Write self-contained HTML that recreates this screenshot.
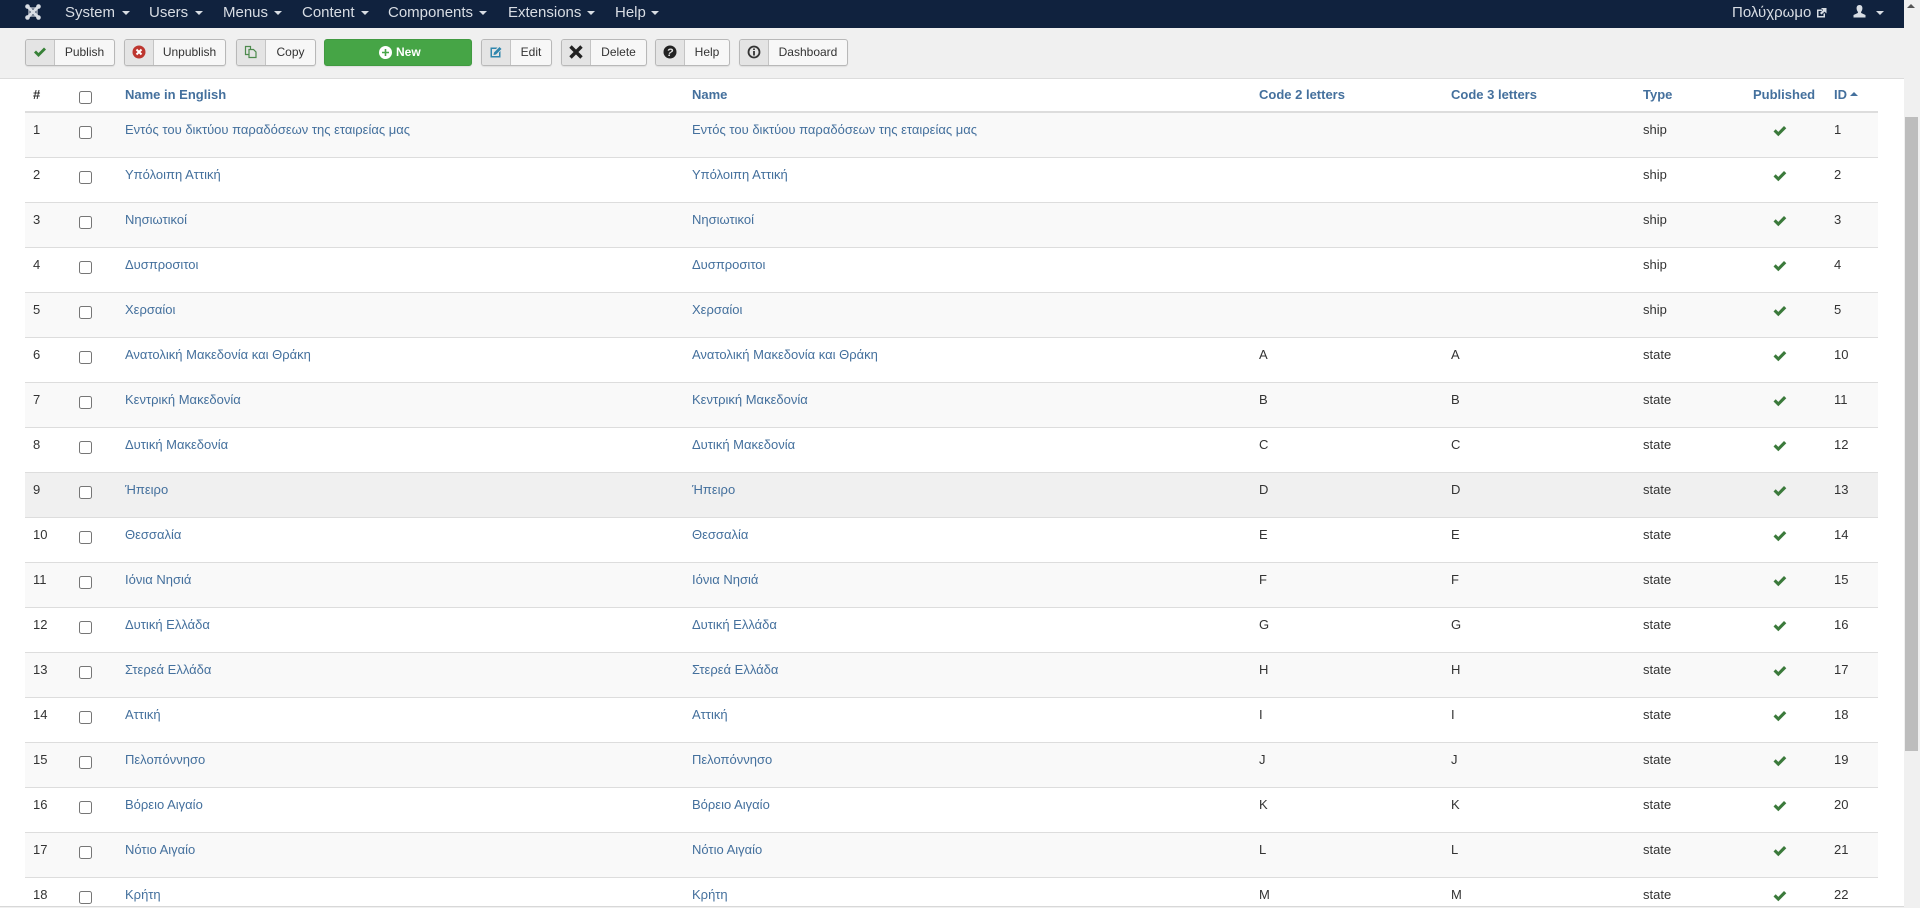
<!DOCTYPE html>
<html lang="en"><head><meta charset="utf-8"><title>Joomla Admin</title>
<style>
*{box-sizing:border-box}
html,body{margin:0;padding:0;width:1920px;height:908px;overflow:hidden;background:#f0f0f0;font-family:"Liberation Sans",Arial,sans-serif;font-size:13px;color:#333}
.nav{position:absolute;left:0;top:0;width:1904px;height:28px;background:#10223e}
.nav span.m{position:absolute;top:3px;font-size:15px;line-height:20px;color:#d8dde4;white-space:nowrap}
.c{position:absolute;width:0;height:0;border-left:4px solid transparent;border-right:4px solid transparent;border-top:4px solid #d8dde4;top:11px}
.bar{position:absolute;left:0;top:28px;width:1904px;height:51px;background:#f0f0f0;border-bottom:1px solid #dcdcdc}
.btn{position:absolute;top:39px;height:27px;border:1px solid #b8b8b8;border-radius:3px;background:#f7f7f7;font-size:12px;line-height:25px;color:#333;text-align:center;white-space:nowrap;box-shadow:0 1px 1px rgba(0,0,0,.08)}
.btn i{position:absolute;left:0;top:0;bottom:0;width:29px;background:#e4e4e4;border-right:1px solid #c4c4c4;border-radius:2px 0 0 2px}
.btn i svg{position:absolute;left:7px;top:5px}
.btn b{font-weight:normal;position:absolute;left:29px;right:0;top:0;text-align:center}
.new{background:#46a546;border-color:#419a41;color:#fff;font-weight:bold}
.main{position:absolute;left:0;top:79px;width:1904px;height:828px;background:#fff;border-bottom:1px solid #d8d8d8;overflow:hidden}
table{position:absolute;left:25px;top:0;width:1853px;border-collapse:collapse;table-layout:fixed}
th,td{padding:0;vertical-align:top;text-align:left;font-size:13px;line-height:18px}
thead tr{height:33px}
th{padding-top:7px;color:#44709d;font-weight:bold;border-bottom:2px solid #ddd}
th:first-child{color:#333}
tbody tr{height:45px}
tbody td{padding-top:8px;border-bottom:1px solid #ddd}
tbody tr:nth-child(odd){background:#f9f9f9}
tbody tr.h{background:#f0f0f0}
td a{color:#44709d;text-decoration:none}
.n{padding-left:8px;position:relative}
.cb{display:block;position:absolute;left:54px;top:13px;width:13px;height:13px;border:1px solid #767676;border-radius:2.5px;background:#fff}
th .cb{top:12px}
.chk{display:block;margin-left:20px;margin-top:4px}
.sb{position:absolute;left:1904px;top:0;width:16px;height:908px;background:#f0f0f0}
.sb .t{position:absolute;left:1px;top:117px;width:13px;height:634px;background:#bdbdbd}
.sb .u{position:absolute;left:3px;top:4px;width:0;height:0;border-left:4px solid transparent;border-right:4px solid transparent;border-bottom:4px solid #555}
</style></head><body>
<svg width="0" height="0" style="position:absolute"><defs><symbol id="k" viewBox="0 0 14 12"><path d="M.5 6.5 2.7 4.3 5.3 6.9 11 1 13.3 3.3 5.3 11.3Z" fill="#3b7a3b"/></symbol></defs></svg>
<div class="nav">
<svg style="position:absolute;left:24px;top:3px" width="18" height="18" viewBox="0 0 18 18" fill="none" stroke="#d8dde4"><path d="M3.5 3.5 14.5 14.5M14.5 3.5 3.5 14.5" stroke-width="3"/><rect x="5" y="5" width="8" height="8" stroke-width="1.6" opacity=".7"/><g fill="#d8dde4" stroke="none"><circle cx="3.5" cy="3.5" r="2.3"/><circle cx="14.5" cy="3.5" r="2.3"/><circle cx="3.5" cy="14.5" r="2.3"/><circle cx="14.5" cy="14.5" r="2.3"/></g></svg>
<span class="m" style="left:65px">System</span><div class="c" style="left:122px"></div>
<span class="m" style="left:149px">Users</span><div class="c" style="left:195px"></div>
<span class="m" style="left:223px">Menus</span><div class="c" style="left:274px"></div>
<span class="m" style="left:302px">Content</span><div class="c" style="left:361px"></div>
<span class="m" style="left:388px">Components</span><div class="c" style="left:479px"></div>
<span class="m" style="left:508px">Extensions</span><div class="c" style="left:587px"></div>
<span class="m" style="left:615px">Help</span><div class="c" style="left:651px"></div>
<span class="m" style="left:1732px">Πολύχρωμο</span>
<svg style="position:absolute;left:1816px;top:7px" width="11" height="11" viewBox="0 0 11 11"><path d="M1 2.5H6V4H2.5V9H7.5V6.5H9V10.5H1Z M5 1H10.5V6.5L8.6 4.6 5.5 7.5 4 6 7 3Z" fill="#d8dde4"/></svg>
<svg style="position:absolute;left:1853px;top:5px" width="13" height="13" viewBox="0 0 13 13"><path d="M6.5 0C8.6 0 9.6 1.6 9.4 3.6 9.3 5 8.7 6.2 8 7L8.2 8 12.5 10V12.5H.5V10L4.8 8 5 7C4.3 6.2 3.7 5 3.6 3.6 3.4 1.6 4.4 0 6.5 0Z" fill="#d8dde4"/></svg>
<div class="c" style="left:1876px"></div>
</div>
<div class="bar"></div>
<div class="btn" style="left:25px;width:90px"><i><svg width="14" height="14" viewBox="0 0 14 14"><path d="M1 7.5 3 5.5 5.5 8 11 2.5 13 4.5 5.5 12Z" fill="#378137"/></svg></i><b>Publish</b></div>
<div class="btn" style="left:124px;width:102px"><i><svg width="14" height="14" viewBox="0 0 14 14"><circle cx="7" cy="7" r="6.5" fill="#bd362f"/><path d="M4.5 4.5 9.5 9.5M9.5 4.5 4.5 9.5" stroke="#fff" stroke-width="2"/></svg></i><b>Unpublish</b></div>
<div class="btn" style="left:236px;width:80px"><i><svg width="14" height="14" viewBox="0 0 14 14" fill="none" stroke="#4d8a4d" stroke-width="1.2"><path d="M1.5 1.5H6.5V9.5H1.5Z"/><path d="M5 4.5H9.5L12 7V12.5H5Z" fill="#e4e4e4"/></svg></i><b>Copy</b></div>
<div class="btn new" style="left:324px;width:148px"><svg style="position:absolute;left:54px;top:6px" width="13" height="13" viewBox="0 0 13 13"><circle cx="6.5" cy="6.5" r="6.5" fill="#fff"/><path d="M3 6.5H10M6.5 3V10" stroke="#46a546" stroke-width="1.6"/></svg><span style="position:absolute;left:71px;top:0">New</span></div>
<div class="btn" style="left:481px;width:71px"><i><svg width="14" height="14" viewBox="0 0 14 14"><path d="M1.5 2.5H8.5L7 4H3V11H10V7.5L11.5 6V12.5H1.5Z" fill="#2f86ad"/><path d="M5 7.5 10.5 2 12.5 4 7 9.5 4.5 10Z" fill="#2f86ad"/></svg></i><b>Edit</b></div>
<div class="btn" style="left:561px;width:86px"><i><svg width="14" height="14" viewBox="0 0 14 14"><path d="M1.5 1.5 12.5 12.5M12.5 1.5 1.5 12.5" stroke="#222" stroke-width="3.4"/></svg></i><b>Delete</b></div>
<div class="btn" style="left:655px;width:75px"><i><svg width="14" height="14" viewBox="0 0 14 14"><circle cx="7" cy="7" r="6.5" fill="#222"/><text x="7" y="11" font-size="11" font-weight="bold" fill="#e4e4e4" text-anchor="middle" font-family="Liberation Sans">?</text></svg></i><b>Help</b></div>
<div class="btn" style="left:739px;width:109px"><i><svg width="14" height="14" viewBox="0 0 14 14"><circle cx="7" cy="7" r="5.5" fill="none" stroke="#333" stroke-width="1.8"/><path d="M7 6V10.5M7 3.5V5" stroke="#333" stroke-width="1.8"/></svg></i><b>Dashboard</b></div>
<div class="main"><table>
<colgroup><col style="width:100px"><col style="width:567px"><col style="width:567px"><col style="width:192px"><col style="width:192px"><col style="width:110px"><col style="width:81px"><col style="width:44px"></colgroup>
<thead><tr><th class="n">#<span class="cb"></span></th><th>Name in English</th><th>Name</th><th>Code 2 letters</th><th>Code 3 letters</th><th>Type</th><th>Published</th><th>ID<span style="display:inline-block;width:0;height:0;border-left:4px solid transparent;border-right:4px solid transparent;border-bottom:4px solid #44709d;margin-left:3px;vertical-align:3px"></span></th></tr></thead>
<tbody>
<tr><td class="n">1<span class="cb"></span></td><td><a>Εντός του δικτύου παραδόσεων της εταιρείας μας</a></td><td><a>Εντός του δικτύου παραδόσεων της εταιρείας μας</a></td><td></td><td></td><td>ship</td><td><svg class="chk" width="14" height="12"><use href="#k"/></svg></td><td>1</td></tr>
<tr><td class="n">2<span class="cb"></span></td><td><a>Υπόλοιπη Αττική</a></td><td><a>Υπόλοιπη Αττική</a></td><td></td><td></td><td>ship</td><td><svg class="chk" width="14" height="12"><use href="#k"/></svg></td><td>2</td></tr>
<tr><td class="n">3<span class="cb"></span></td><td><a>Νησιωτικοί</a></td><td><a>Νησιωτικοί</a></td><td></td><td></td><td>ship</td><td><svg class="chk" width="14" height="12"><use href="#k"/></svg></td><td>3</td></tr>
<tr><td class="n">4<span class="cb"></span></td><td><a>Δυσπροσιτοι</a></td><td><a>Δυσπροσιτοι</a></td><td></td><td></td><td>ship</td><td><svg class="chk" width="14" height="12"><use href="#k"/></svg></td><td>4</td></tr>
<tr><td class="n">5<span class="cb"></span></td><td><a>Χερσαίοι</a></td><td><a>Χερσαίοι</a></td><td></td><td></td><td>ship</td><td><svg class="chk" width="14" height="12"><use href="#k"/></svg></td><td>5</td></tr>
<tr><td class="n">6<span class="cb"></span></td><td><a>Ανατολική Μακεδονία και Θράκη</a></td><td><a>Ανατολική Μακεδονία και Θράκη</a></td><td>A</td><td>A</td><td>state</td><td><svg class="chk" width="14" height="12"><use href="#k"/></svg></td><td>10</td></tr>
<tr><td class="n">7<span class="cb"></span></td><td><a>Κεντρική Μακεδονία</a></td><td><a>Κεντρική Μακεδονία</a></td><td>B</td><td>B</td><td>state</td><td><svg class="chk" width="14" height="12"><use href="#k"/></svg></td><td>11</td></tr>
<tr><td class="n">8<span class="cb"></span></td><td><a>Δυτική Μακεδονία</a></td><td><a>Δυτική Μακεδονία</a></td><td>C</td><td>C</td><td>state</td><td><svg class="chk" width="14" height="12"><use href="#k"/></svg></td><td>12</td></tr>
<tr class="h"><td class="n">9<span class="cb"></span></td><td><a>Ήπειρο</a></td><td><a>Ήπειρο</a></td><td>D</td><td>D</td><td>state</td><td><svg class="chk" width="14" height="12"><use href="#k"/></svg></td><td>13</td></tr>
<tr><td class="n">10<span class="cb"></span></td><td><a>Θεσσαλία</a></td><td><a>Θεσσαλία</a></td><td>E</td><td>E</td><td>state</td><td><svg class="chk" width="14" height="12"><use href="#k"/></svg></td><td>14</td></tr>
<tr><td class="n">11<span class="cb"></span></td><td><a>Ιόνια Νησιά</a></td><td><a>Ιόνια Νησιά</a></td><td>F</td><td>F</td><td>state</td><td><svg class="chk" width="14" height="12"><use href="#k"/></svg></td><td>15</td></tr>
<tr><td class="n">12<span class="cb"></span></td><td><a>Δυτική Ελλάδα</a></td><td><a>Δυτική Ελλάδα</a></td><td>G</td><td>G</td><td>state</td><td><svg class="chk" width="14" height="12"><use href="#k"/></svg></td><td>16</td></tr>
<tr><td class="n">13<span class="cb"></span></td><td><a>Στερεά Ελλάδα</a></td><td><a>Στερεά Ελλάδα</a></td><td>H</td><td>H</td><td>state</td><td><svg class="chk" width="14" height="12"><use href="#k"/></svg></td><td>17</td></tr>
<tr><td class="n">14<span class="cb"></span></td><td><a>Αττική</a></td><td><a>Αττική</a></td><td>I</td><td>I</td><td>state</td><td><svg class="chk" width="14" height="12"><use href="#k"/></svg></td><td>18</td></tr>
<tr><td class="n">15<span class="cb"></span></td><td><a>Πελοπόννησο</a></td><td><a>Πελοπόννησο</a></td><td>J</td><td>J</td><td>state</td><td><svg class="chk" width="14" height="12"><use href="#k"/></svg></td><td>19</td></tr>
<tr><td class="n">16<span class="cb"></span></td><td><a>Βόρειο Αιγαίο</a></td><td><a>Βόρειο Αιγαίο</a></td><td>K</td><td>K</td><td>state</td><td><svg class="chk" width="14" height="12"><use href="#k"/></svg></td><td>20</td></tr>
<tr><td class="n">17<span class="cb"></span></td><td><a>Νότιο Αιγαίο</a></td><td><a>Νότιο Αιγαίο</a></td><td>L</td><td>L</td><td>state</td><td><svg class="chk" width="14" height="12"><use href="#k"/></svg></td><td>21</td></tr>
<tr><td class="n">18<span class="cb"></span></td><td><a>Κρήτη</a></td><td><a>Κρήτη</a></td><td>M</td><td>M</td><td>state</td><td><svg class="chk" width="14" height="12"><use href="#k"/></svg></td><td>22</td></tr>
</tbody></table></div>
<div class="sb"><div class="u"></div><div class="t"></div></div>
</body></html>
